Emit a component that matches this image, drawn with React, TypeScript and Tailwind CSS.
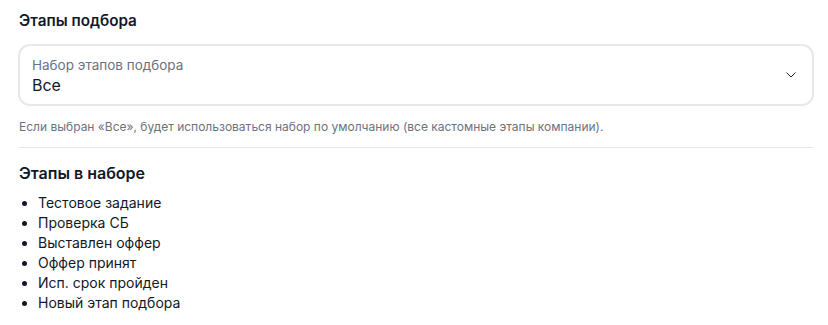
const stages = [
  'Тестовое задание',
  'Проверка СБ',
  'Выставлен оффер',
  'Оффер принят',
  'Исп. срок пройден',
  'Новый этап подбора',
];

function ChevronDown() {
  return (
    <svg width="10" height="6" viewBox="0 0 10 6" fill="none" className="shrink-0">
      <polyline points="0.5,0.5 5,5 9.5,0.5" stroke="#1f2937" strokeWidth="1" />
    </svg>
  );
}

export default function App() {
  return (
    <div className="min-h-screen bg-white pl-[18px] pr-[14px] pt-[11px] font-['Inter',sans-serif] text-[#111827]">
      <h2 className="pl-px text-[15.25px] leading-[20px] font-semibold">Этапы подбора</h2>

      <button
        type="button"
        className="mt-[13px] flex h-[62px] w-full items-center justify-between rounded-[12px] border-2 border-[#e8e8e8] pl-[12px] pr-[16px] text-left"
      >
        <div className="flex flex-col pt-[2px]">
          <span className="text-[13.5px] leading-[18px] text-[#6b7280]">Набор этапов подбора</span>
          <span className="text-[16px] leading-[22px] text-[#111827]">Все</span>
        </div>
        <ChevronDown />
      </button>

      <p className="mt-[13px] pl-px text-[12px] leading-[16px] text-[#6b7280]">
        Если выбран «Все», будет использоваться набор по умолчанию (все кастомные этапы компании).
      </p>

      <div className="mt-[12px] h-px w-full bg-[#e5e7eb]" />

      <h3 className="mt-[15px] pl-px text-[16px] leading-[20px] font-semibold">Этапы в наборе</h3>

      <ul className="mt-[10px] flex flex-col">
        {stages.map((s) => (
          <li key={s} className="flex items-center text-[14px] leading-[20px]">
            <span className="ml-[4px] mr-[11px] h-[5px] w-[5px] rounded-full bg-[#111827]" />
            {s}
          </li>
        ))}
      </ul>
    </div>
  );
}
